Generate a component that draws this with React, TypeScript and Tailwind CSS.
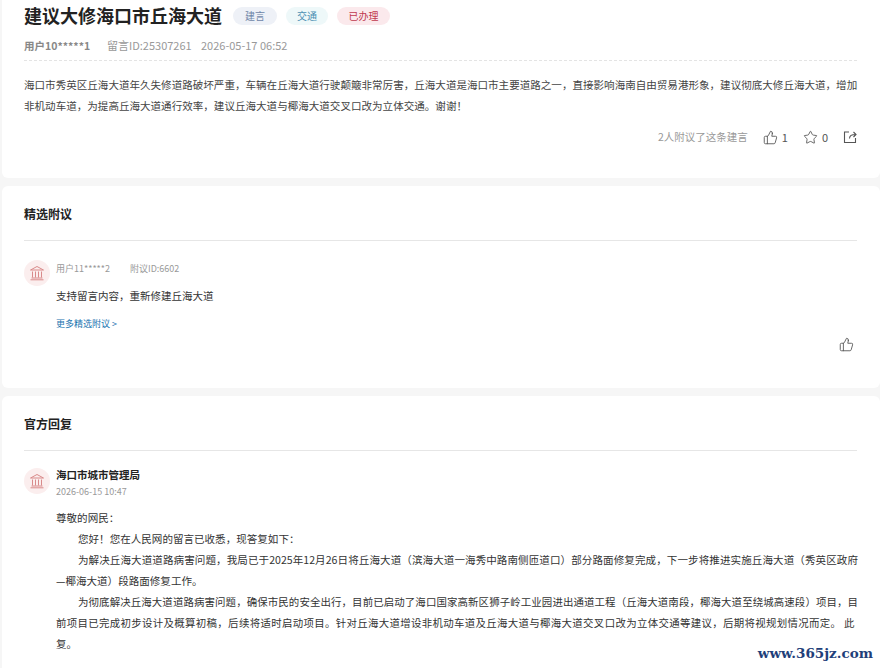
import React from 'react';
import { ThumbsUp, Star } from 'lucide-react';

const cjk = { fontFamily: '"Noto Sans CJK SC", "Liberation Sans", sans-serif' };

function Bank() {
  return (
    <div className="w-[26px] h-[26px] shrink-0 rounded-full bg-[#fbeeee] flex items-center justify-center">
      <svg width="16" height="16" viewBox="0 0 16 16" fill="none" stroke="#d98a8a" strokeWidth="1">
        <path d="M8 1.5 L14.5 5 H1.5 Z" />
        <path d="M3.5 6.5 V12.5 M6.5 6.5 V12.5 M9.5 6.5 V12.5 M12.5 6.5 V12.5" />
        <path d="M2.5 13 H13.5 M1.5 14.8 H14.5" />
      </svg>
    </div>
  );
}

function ShareIcon() {
  return (
    <svg width="14" height="14" viewBox="0 0 14 14" fill="none" stroke="#555" strokeWidth="1.1">
      <path d="M6 2 H1.5 V12.5 H12.5 V8" />
      <path d="M6.5 8.5 C6.5 6 8.5 4.5 12.5 4.5 M10.5 2 L13 4.5 L10.5 7" />
    </svg>
  );
}

export default function App() {
  return (
    <div className="relative w-[880px] h-[668px] overflow-hidden bg-[#f6f6f6] pl-[2px] flex flex-col gap-2" style={cjk}>
      <section className="h-[178px] shrink-0 bg-white rounded-b-md px-[22px]">
        <div className="flex items-center h-[31px]">
          <h1 className="text-lg leading-[31px] font-bold text-[#222] w-[198px] whitespace-nowrap">建议大修海口市丘海大道</h1>
          <span className="ml-[11px] w-[44px] h-[18px] rounded-full bg-[#eef1f7] text-[#6f86a8] text-[10px] leading-[18px] text-center">建言</span>
          <span className="ml-[9px] w-[42px] h-[18px] rounded-full bg-[#eef8f9] text-[#4d8fb3] text-[10px] leading-[18px] text-center">交通</span>
          <span className="ml-[9px] w-[53px] h-[18px] rounded-full bg-[#fbe9ec] text-[#c0394f] text-[10px] leading-[18px] text-center">已办理</span>
        </div>
        <div className="mt-[6px] flex items-center h-[17px] text-[11px] leading-[17px] text-[#999] whitespace-nowrap">
          <span className="font-bold text-[#888] text-[10.5px] w-[83px]">用户10*****1</span>
          <span className="w-[94px]">留言ID:25307261</span>
          <span>2026-05-17 06:52</span>
        </div>
        <div className="mt-[6px] w-[833px] border-t border-dashed border-[#e4e4e4]" />
        <p className="mt-[14px] w-[834px] text-[10.55px] leading-[20.5px] text-[#444]">
          海口市秀英区丘海大道年久失修道路破坏严重，车辆在丘海大道行驶颠簸非常厉害，丘海大道是海口市主要道路之一，直接影响海南自由贸易港形象，建议彻底大修丘海大道，增加非机动车道，为提高丘海大道通行效率，建议丘海大道与椰海大道交叉口改为立体交通。谢谢！
        </p>
        <div className="mt-[13px] w-[834px] flex items-center justify-end text-[10.5px] leading-[16px] text-[#999]">
          <span>2人附议了这条建言</span>
          <ThumbsUp className="ml-[15px] w-[15px] h-[15px] text-[#555]" strokeWidth={1.4} />
          <span className="ml-[4px] text-[#555] text-[11px]">1</span>
          <Star className="ml-[15px] w-[15px] h-[15px] text-[#555]" strokeWidth={1.4} />
          <span className="ml-[4px] text-[#555] text-[11px]">0</span>
          <span className="ml-[15px] mr-[1px] flex"><ShareIcon /></span>
        </div>
      </section>

      <section className="h-[202px] shrink-0 bg-white rounded-md px-[22px]">
        <h2 className="pt-[19px] text-[12px] leading-[18px] font-bold text-[#222]">精选附议</h2>
        <div className="mt-[17px] w-[833px] border-t border-[#e6e6e6]" />
        <div className="mt-[19px] flex gap-[6px]">
          <Bank />
          <div>
            <div className="flex text-[9px] leading-[14px] text-[#999] mt-[2px]">
              <span className="w-[74px]">用户11*****2</span>
              <span>附议ID:6602</span>
            </div>
            <p className="mt-[11px] text-[10.5px] leading-[18px] text-[#333]">支持留言内容，重新修建丘海大道</p>
            <p className="mt-[12px] text-[9px] leading-[14px] text-[#1a74b0]">更多精选附议 &gt;</p>
          </div>
        </div>
        <div className="w-[834px] mt-[6px] flex justify-end pr-[4px]">
          <ThumbsUp className="w-[15px] h-[15px] text-[#555]" strokeWidth={1.4} />
        </div>
      </section>

      <section className="flex-1 bg-white rounded-t-md px-[22px]">
        <h2 className="pt-[19px] text-[12px] leading-[18px] font-bold text-[#222]">官方回复</h2>
        <div className="mt-[17px] w-[833px] border-t border-[#e6e6e6]" />
        <div className="mt-[17px] flex gap-[6px]">
          <Bank />
          <div className="w-[803px]">
            <div className="text-[10.5px] leading-[16px] font-bold text-[#222] -mt-[1px]">海口市城市管理局</div>
            <div className="text-[9px] leading-[14px] text-[#999] mt-[2px]">2026-06-15 10:47</div>
            <div className="mt-[8px] text-[10.55px] leading-[21px] text-[#333] text-justify">
              <p>尊敬的网民：</p>
              <p className="indent-[22px]">您好！您在人民网的留言已收悉，现答复如下：</p>
              <p className="indent-[22px]">为解决丘海大道道路病害问题，我局已于2025年12月26日将丘海大道（滨海大道一海秀中路南侧匝道口）部分路面修复完成，下一步将推进实施丘海大道（秀英区政府—椰海大道）段路面修复工作。</p>
              <p className="indent-[22px] text-[10.45px]">为彻底解决丘海大道道路病害问题，确保市民的安全出行，目前已启动了海口国家高新区狮子岭工业园进出通道工程（丘海大道南段，椰海大道至绕城高速段）项目，目<span className="tracking-[0.32px]">前项目已完成初步设计及概算初稿，后续将适时启动项目。针对丘海大道增设非机动车道及丘海大道与椰海大道交叉口改为立体交通等建议，后期将视规划情况而定。 此</span><br />复。</p>
            </div>
          </div>
        </div>
      </section>

      <span className="absolute right-[7px] bottom-[6px] text-[13.5px] leading-[18px] font-bold text-[#1f3f7a]" style={{ fontFamily: '"DejaVu Serif", serif' }}>www.365jz.com</span>
    </div>
  );
}
